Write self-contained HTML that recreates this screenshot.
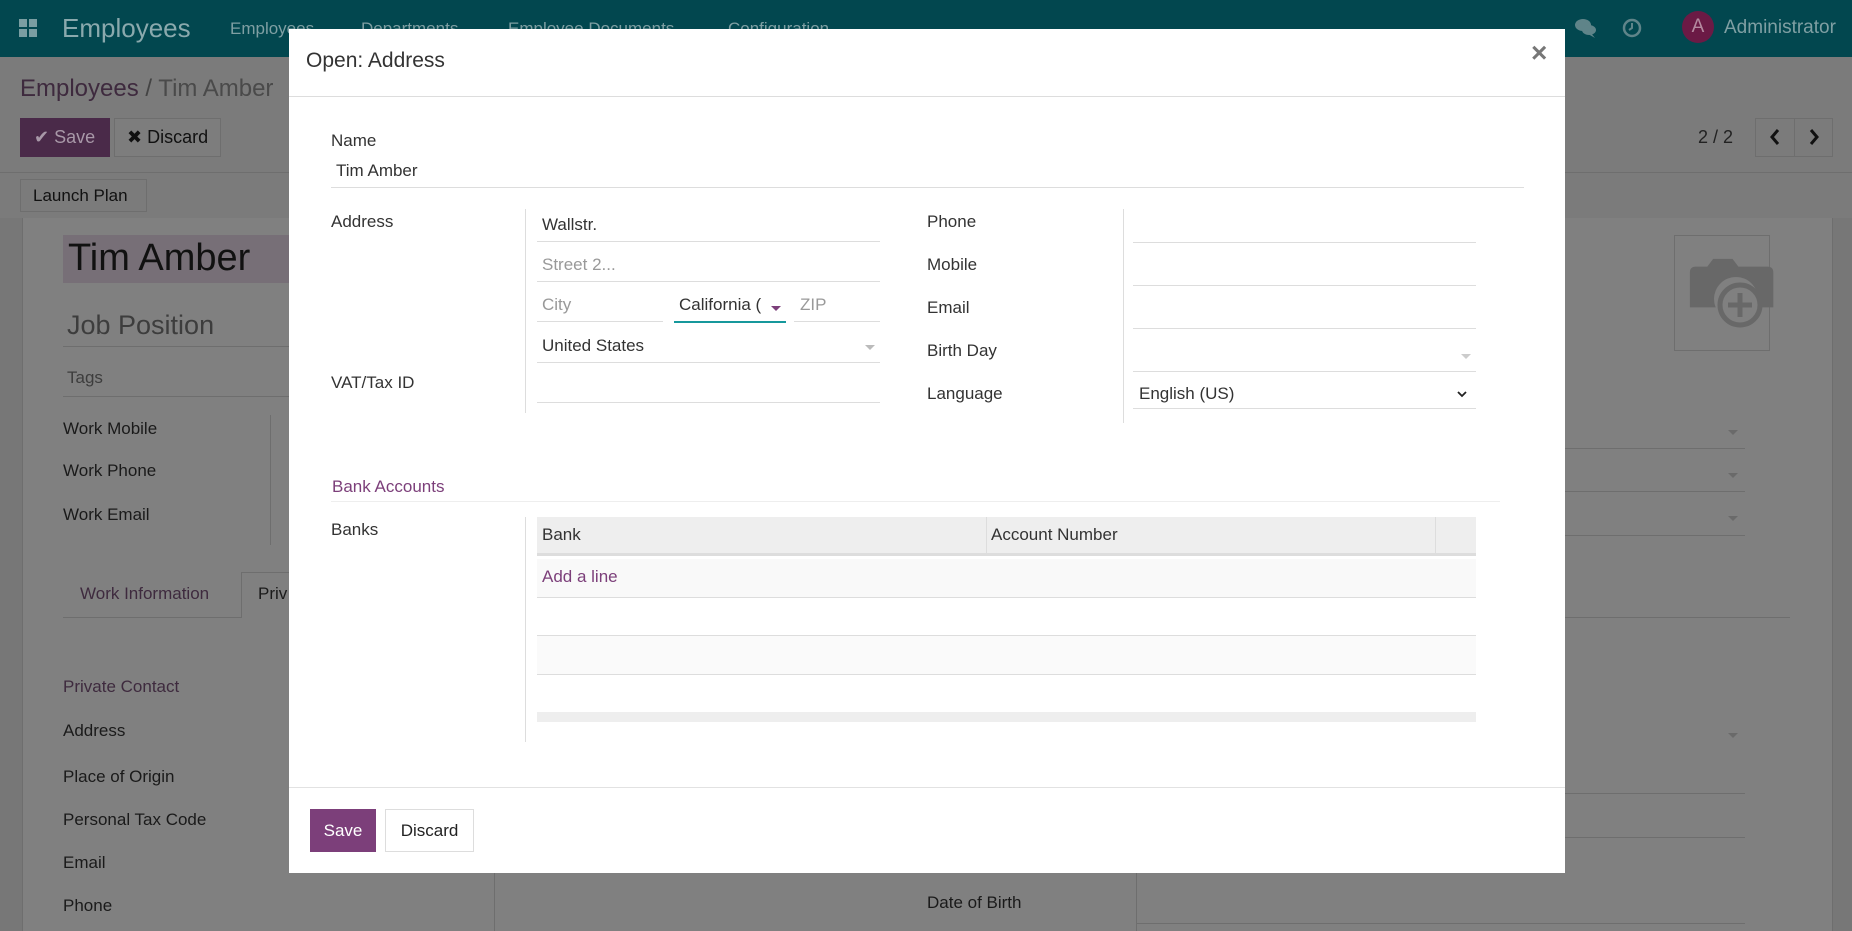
<!DOCTYPE html>
<html><head><meta charset="utf-8"><style>
*{margin:0;padding:0;box-sizing:border-box}
body{width:1852px;height:931px;overflow:hidden;position:relative;font-family:"Liberation Sans",sans-serif;background:#777;color:#222}
.a{position:absolute;white-space:nowrap}
.bg{color:#1a1a1a;font-size:17px}
.hl{position:absolute;height:1px;background:#6e6e6e}
.m{position:absolute;left:289px;top:29px;width:1276px;height:844px;background:#fff}
.m .a{font-size:17px;color:#333}
.ln{position:absolute;height:1px;background:#ddd}
.vl{position:absolute;width:1px;background:#ddd}
.tri{position:absolute;width:0;height:0;border-left:5px solid transparent;border-right:5px solid transparent;border-top:5px solid #bbb}
</style></head><body>
<!-- navbar -->
<div class="a" style="left:0;top:0;width:1852px;height:57px;background:#02474f"></div>
<div class="a" style="left:19px;top:19px;width:8px;height:8px;background:#7a9ea2;box-shadow:10px 0 #7a9ea2,0 10px #7a9ea2,10px 10px #7a9ea2"></div>
<div class="a" style="left:62px;top:13px;font-size:26px;color:#8aa9ad">Employees</div>
<div class="a" style="left:230px;top:19px;font-size:17px;color:#7f9fa3">Employees</div>
<div class="a" style="left:361px;top:19px;font-size:17px;color:#7f9fa3">Departments</div>
<div class="a" style="left:508px;top:19px;font-size:17px;color:#7f9fa3">Employee Documents</div>
<div class="a" style="left:728px;top:19px;font-size:17px;color:#7f9fa3">Configuration</div>
<svg class="a" style="left:1574px;top:17px" width="24" height="22" viewBox="0 0 24 22"><ellipse cx="9" cy="8" rx="8" ry="6" fill="#5f8489"/><ellipse cx="15" cy="13" rx="7" ry="5" fill="#5f8489"/><path d="M17 16 L21 21 L14 17Z" fill="#5f8489"/></svg>
<svg class="a" style="left:1622px;top:18px" width="20" height="20" viewBox="0 0 20 20"><circle cx="10" cy="10" r="8" fill="none" stroke="#5f8489" stroke-width="2.5"/><path d="M10 5 V10 L7 12" fill="none" stroke="#5f8489" stroke-width="2"/></svg>
<div class="a" style="left:1682px;top:11px;width:32px;height:32px;border-radius:50%;background:#6b1a45;color:#b58aa0;font-size:19px;text-align:center;line-height:32px">A</div>
<div class="a" style="left:1724px;top:17px;font-size:19px;color:#7f9fa3">Administrator</div>
<!-- control panel -->
<div class="a" style="left:0;top:57px;width:1852px;height:161px;background:#7b7b7b"></div>
<div class="a" style="left:20px;top:75px;font-size:24px;color:#3e2a3e">Employees <span style="color:#444">/</span> <span style="color:#4a4a4a">Tim Amber</span></div>
<div class="a" style="left:20px;top:118px;width:90px;height:39px;background:#4a2a49;color:#a898a8;font-size:18px;line-height:39px;padding-left:14px">✔ Save</div>
<div class="a" style="left:114px;top:118px;width:107px;height:39px;background:#7d7d7d;border:1px solid #6e6e6e;color:#111;font-size:18px;line-height:37px;padding-left:12px">✖ Discard</div>
<div class="a" style="left:1698px;top:127px;font-size:18px;color:#222">2 / 2</div>
<div class="a" style="left:1755px;top:118px;width:78px;height:39px;border:1px solid #6e6e6e"></div>
<div class="a" style="left:1794px;top:118px;width:1px;height:39px;background:#6e6e6e"></div>
<svg class="a" style="left:1768px;top:128px" width="14" height="18" viewBox="0 0 14 18"><path d="M10 2 L4 9 L10 16" fill="none" stroke="#111" stroke-width="3"/></svg>
<svg class="a" style="left:1807px;top:128px" width="14" height="18" viewBox="0 0 14 18"><path d="M4 2 L10 9 L4 16" fill="none" stroke="#111" stroke-width="3"/></svg>
<div class="hl" style="left:0;top:172px;width:1852px"></div>
<div class="a" style="left:20px;top:179px;width:127px;height:33px;border:1px solid #6e6e6e;font-size:17px;line-height:31px;padding-left:12px;color:#111">Launch Plan</div>
<!-- sheet -->
<div class="a" style="left:22px;top:218px;width:1811px;height:713px;background:#808080;border-left:1px solid #6e6e6e;border-right:1px solid #6e6e6e"></div>
<div class="a" style="left:63px;top:235px;width:240px;height:48px;background:#776f77"></div>
<div class="a" style="left:68px;top:237px;font-size:38px;color:#111">Tim Amber</div>
<div class="a" style="left:67px;top:310px;font-size:27px;color:#3d3d3d">Job Position</div>
<div class="hl" style="left:63px;top:346px;width:230px"></div>
<div class="a" style="left:67px;top:368px;font-size:17px;color:#3d3d3d">Tags</div>
<div class="hl" style="left:63px;top:396px;width:230px"></div>
<div class="a bg" style="left:63px;top:419px">Work Mobile</div>
<div class="a bg" style="left:63px;top:461px">Work Phone</div>
<div class="a bg" style="left:63px;top:505px">Work Email</div>
<div class="a" style="left:270px;top:415px;width:1px;height:130px;background:#6e6e6e"></div>
<div class="a" style="left:63px;top:572px;width:178px;height:46px;border-bottom:1px solid #6e6e6e"></div>
<div class="a" style="left:241px;top:572px;width:60px;height:46px;border:1px solid #6e6e6e;border-bottom:none"></div>
<div class="a" style="left:80px;top:584px;font-size:17px;color:#3e2a3e">Work Information</div>
<div class="a bg" style="left:258px;top:584px">Priv</div>
<div class="hl" style="left:300px;top:617px;width:1490px"></div>
<div class="a" style="left:63px;top:677px;font-size:17px;color:#3e2a3e">Private Contact</div>
<div class="a bg" style="left:63px;top:721px">Address</div>
<div class="a bg" style="left:63px;top:767px">Place of Origin</div>
<div class="a bg" style="left:63px;top:810px">Personal Tax Code</div>
<div class="a bg" style="left:63px;top:853px">Email</div>
<div class="a bg" style="left:63px;top:896px">Phone</div>
<div class="a bg" style="left:927px;top:893px">Date of Birth</div>
<div class="a" style="left:494px;top:873px;width:1px;height:58px;background:#6e6e6e"></div>
<div class="a" style="left:1136px;top:873px;width:1px;height:58px;background:#6e6e6e"></div>
<div class="a" style="left:1674px;top:235px;width:96px;height:116px;border:1px solid #6e6e6e"></div>
<svg class="a" style="left:1686px;top:255px" width="90" height="80" viewBox="0 0 90 80"><path d="M4 18 Q4 12 10 12 H22 L28 4 H48 L54 12 H84 Q90 12 90 18 V54 H4Z" fill="#686868" transform="scale(0.97)"/><circle cx="50" cy="44" r="22" fill="#808080"/><circle cx="54" cy="50" r="20" fill="#808080" stroke="#686868" stroke-width="5"/><path d="M54 38 V62 M42 50 H66" stroke="#686868" stroke-width="5"/></svg>
<div class="tri" style="left:1728px;top:430px;border-top-color:#6a6a6a"></div>
<div class="tri" style="left:1728px;top:473px;border-top-color:#6a6a6a"></div>
<div class="tri" style="left:1728px;top:516px;border-top-color:#6a6a6a"></div>
<div class="tri" style="left:1728px;top:733px;border-top-color:#6a6a6a"></div>
<div class="hl" style="left:1136px;top:448px;width:609px"></div>
<div class="hl" style="left:1136px;top:491px;width:609px"></div>
<div class="hl" style="left:1136px;top:535px;width:609px"></div>
<div class="hl" style="left:1136px;top:793px;width:609px"></div>
<div class="hl" style="left:1136px;top:837px;width:609px"></div>
<div class="hl" style="left:1136px;top:923px;width:609px"></div>
<!-- modal -->
<div class="m">
<div class="a" style="left:17px;top:20px;font-size:21px!important;color:#333">Open: Address</div>
<div class="a" style="left:1242px;top:8px;font-size:28px!important;color:#777;font-weight:bold">×</div>
<div class="ln" style="left:0;top:67px;width:1276px"></div>
<div class="a" style="left:42px;top:102px">Name</div>
<div class="a" style="left:47px;top:132px">Tim Amber</div>
<div class="ln" style="left:42px;top:158px;width:1193px"></div>
<div class="a" style="left:42px;top:183px">Address</div>
<div class="vl" style="left:236px;top:180px;height:204px"></div>
<div class="a" style="left:253px;top:186px">Wallstr.</div>
<div class="ln" style="left:248px;top:212px;width:343px"></div>
<div class="a" style="left:253px;top:226px;color:#999!important">Street 2...</div>
<div class="ln" style="left:248px;top:252px;width:343px"></div>
<div class="a" style="left:253px;top:266px;color:#999!important">City</div>
<div class="ln" style="left:248px;top:292px;width:126px"></div>
<div class="a" style="left:390px;top:266px">California (</div>
<div class="a" style="left:385px;top:265px;width:113px;height:28px;background:linear-gradient(90deg,transparent 94px,#fff 94px)"></div>
<div class="tri" style="left:482px;top:277px;border-top-color:#7c3f7a"></div>
<div class="ln" style="left:385px;top:292px;width:112px;height:2px;background:#16989c"></div>
<div class="a" style="left:511px;top:266px;color:#999!important">ZIP</div>
<div class="ln" style="left:505px;top:292px;width:86px"></div>
<div class="a" style="left:253px;top:307px">United States</div>
<div class="tri" style="left:576px;top:316px"></div>
<div class="ln" style="left:248px;top:333px;width:343px"></div>
<div class="a" style="left:42px;top:344px">VAT/Tax ID</div>
<div class="ln" style="left:248px;top:373px;width:343px"></div>
<div class="a" style="left:638px;top:183px">Phone</div>
<div class="a" style="left:638px;top:226px">Mobile</div>
<div class="a" style="left:638px;top:269px">Email</div>
<div class="a" style="left:638px;top:312px">Birth Day</div>
<div class="a" style="left:638px;top:355px">Language</div>
<div class="vl" style="left:834px;top:180px;height:214px"></div>
<div class="ln" style="left:844px;top:213px;width:343px"></div>
<div class="ln" style="left:844px;top:256px;width:343px"></div>
<div class="ln" style="left:844px;top:299px;width:343px"></div>
<div class="tri" style="left:1172px;top:325px;border-top-color:#ccc"></div>
<div class="ln" style="left:844px;top:342px;width:343px"></div>
<div class="a" style="left:850px;top:355px">English (US)</div>
<svg class="a" style="left:1167px;top:360px" width="12" height="10" viewBox="0 0 12 10"><path d="M2 3 L6 7 L10 3" fill="none" stroke="#222" stroke-width="1.8"/></svg>
<div class="ln" style="left:844px;top:379px;width:343px"></div>
<div class="a" style="left:43px;top:448px;color:#7c3f7a!important">Bank Accounts</div>
<div class="ln" style="left:42px;top:472px;width:1169px;background:#eee"></div>
<div class="a" style="left:42px;top:491px">Banks</div>
<div class="vl" style="left:236px;top:488px;height:225px"></div>
<div class="a" style="left:248px;top:488px;width:939px;height:39px;background:#eee;border-bottom:3px solid #ddd"></div>
<div class="vl" style="left:697px;top:488px;height:39px"></div>
<div class="vl" style="left:1146px;top:488px;height:39px"></div>
<div class="a" style="left:253px;top:496px">Bank</div>
<div class="a" style="left:702px;top:496px">Account Number</div>
<div class="a" style="left:248px;top:530px;width:939px;height:38px;background:#f9f9f9"></div>
<div class="a" style="left:253px;top:538px;color:#7c3f7a!important">Add a line</div>
<div class="ln" style="left:248px;top:568px;width:939px"></div>
<div class="ln" style="left:248px;top:606px;width:939px"></div>
<div class="a" style="left:248px;top:607px;width:939px;height:38px;background:#fafafa"></div>
<div class="ln" style="left:248px;top:645px;width:939px"></div>
<div class="a" style="left:248px;top:683px;width:939px;height:10px;background:#eee"></div>
<div class="ln" style="left:0;top:758px;width:1276px;background:#e2e2e2"></div>
<div class="a" style="left:21px;top:780px;width:66px;height:43px;background:#7c3f7a;color:#fff!important;text-align:center;line-height:43px">Save</div>
<div class="a" style="left:96px;top:780px;width:89px;height:43px;border:1px solid #ddd;text-align:center;line-height:41px;color:#222!important">Discard</div>
</div>
</body></html>
